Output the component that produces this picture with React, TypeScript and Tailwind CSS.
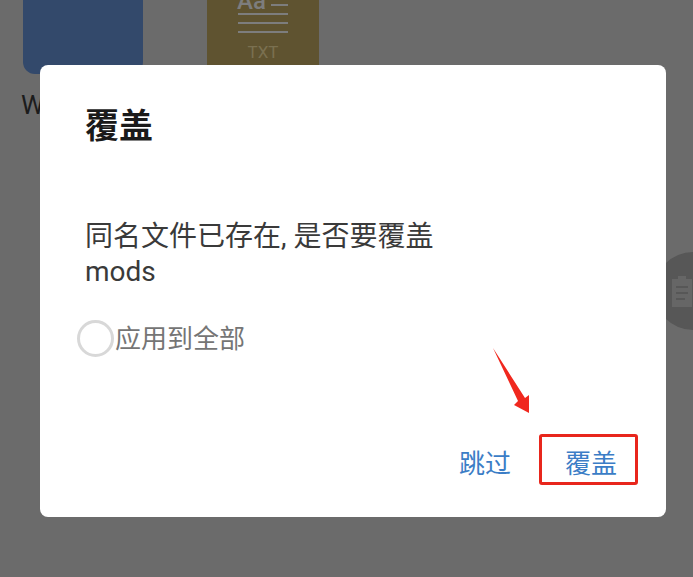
const font = { fontFamily: '"Roboto", "Noto Sans CJK SC", sans-serif' };

function App() {
  return (
    <div
      className="relative h-[577px] w-[693px] overflow-hidden bg-[#6b6b6b]"
      style={font}
    >
      {/* dimmed file list behind the dialog */}
      <div className="flex items-start pl-[23px]">
        <div className="flex w-[184px] flex-col">
          <div className="h-[74px] w-[120px] rounded-b-[12px] bg-[#33496b]" />
          <span className="-ml-[2px] mt-[13px] text-[26px] leading-[36px] text-[#1c1c1c]">
            W
          </span>
        </div>
        <div className="flex h-[72px] w-[112px] flex-col items-center bg-[#5f5330] pt-[4px]">
          <div className="flex w-[50px] flex-col gap-[7px]">
            <div className="ml-auto h-[2px] w-[17px] bg-[#7d7d7d]" />
            <div className="h-[2px] w-full bg-[#7d7d7d]" />
            <div className="h-[2px] w-full bg-[#7d7d7d]" />
            <div className="h-[2px] w-full bg-[#7d7d7d]" />
          </div>
          <span className="mt-[9px] text-[17px] leading-[20px] text-[#7a7050]">
            TXT
          </span>
        </div>
      </div>
      <div className="absolute left-[237px] top-[-13px] text-[24px] font-medium leading-[28px] text-[#7d7d7d]">
        Aa
      </div>

      {/* floating button */}
      <div className="absolute left-[654px] top-[252px] flex h-[78px] w-[78px] items-center rounded-full bg-[#575757] pl-[18px]">
        <svg width="20" height="32" viewBox="0 0 20 32" fill="none">
          <path d="M0 4h6V1h8v3h6v28H0z" fill="#666666" />
          <path d="M4 12h12M4 18h12M4 24h9" stroke="#575757" strokeWidth="2" />
        </svg>
      </div>

      {/* dialog */}
      <div className="absolute left-[40px] top-[65px] flex h-[452px] w-[626px] flex-col rounded-[8px] bg-white pt-[38px]">
        <h2 className="pl-[45px] text-[34px] font-bold leading-[46px] text-[#1a1a1a]">
          覆盖
        </h2>
        <p className="mt-[70px] pl-[45px] text-[28px] leading-[35px] text-[#3a3a3a]">
          同名文件已存在, 是否要覆盖
          <br />
          mods
        </p>
        <div className="mt-[31px] flex items-center pl-[37px]">
          <div className="h-[37px] w-[37px] shrink-0 rounded-full border-[3px] border-[#d8d8d8]" />
          <span className="ml-px text-[26px] leading-[36px] text-[#757575]">
            应用到全部
          </span>
        </div>
        <div className="mt-auto flex items-center justify-end pb-[35px] pr-[28px]">
          <button className="mr-[54px] text-[26px] leading-[36px] text-[#3b7dc6]">
            跳过
          </button>
          <button className="mr-[21px] text-[26px] leading-[36px] text-[#3b7dc6]">
            覆盖
          </button>
        </div>
      </div>

      {/* red annotation */}
      <div className="absolute left-[539px] top-[434px] h-[51px] w-[99px] rounded-[3px] border-[3px] border-[#e8261c]" />
      <svg
        className="absolute left-[490px] top-[345px]"
        width="42"
        height="70"
        viewBox="0 0 42 70"
      >
        <path d="M3 3 L35 53 L39 50 L39 68 L24 60 L28 56 Z" fill="#f0281e" />
      </svg>
    </div>
  );
}

export default App;
